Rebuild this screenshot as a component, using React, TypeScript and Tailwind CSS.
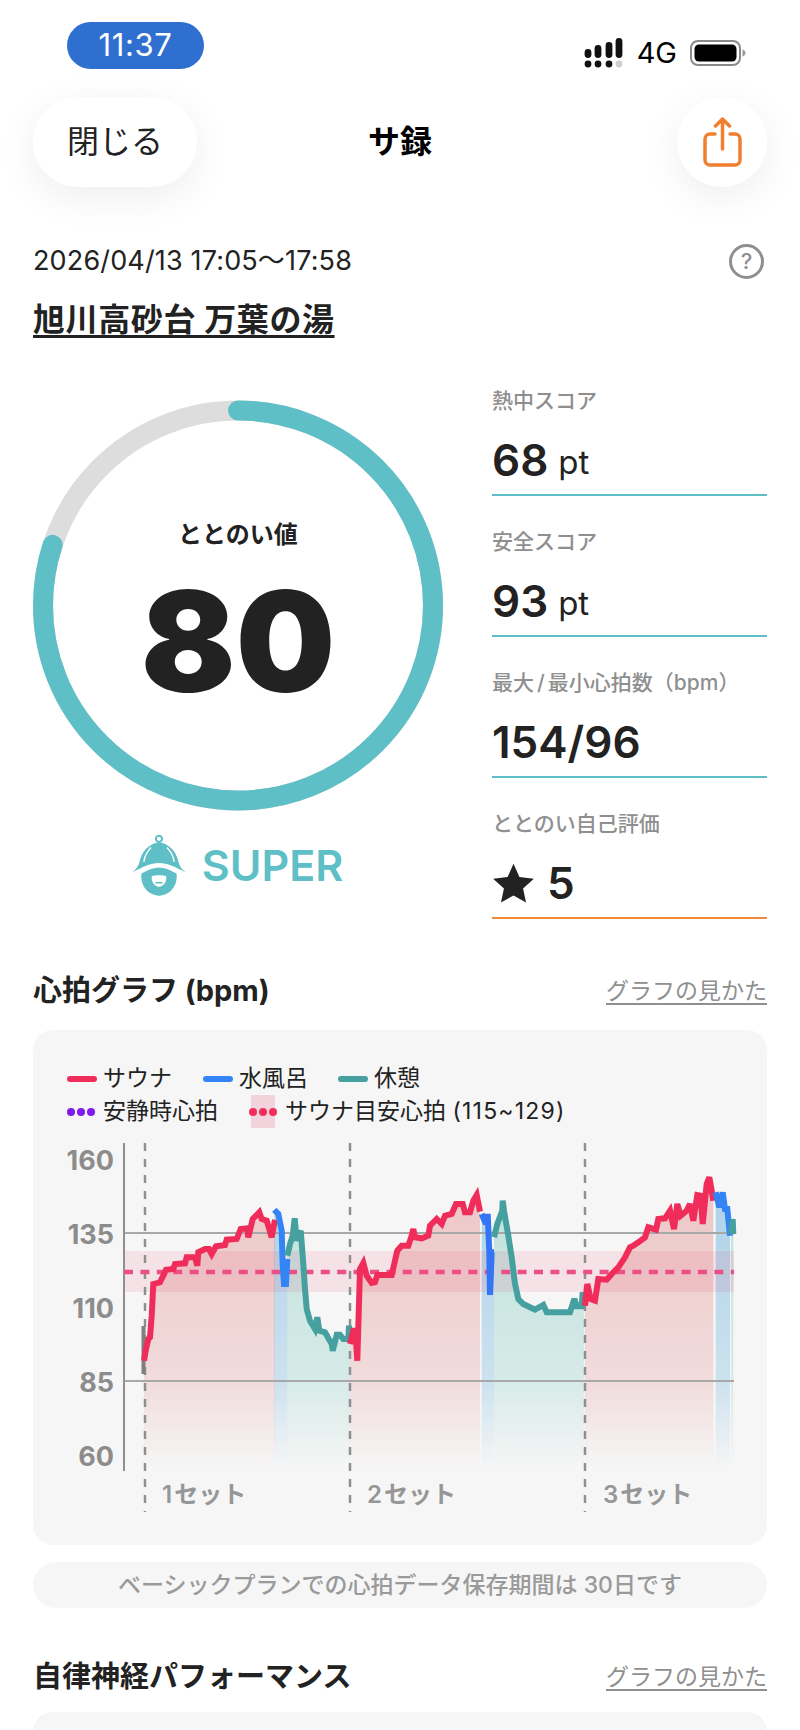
import React from "react";

type Pt = [number, number];

// traced off the reference, in zoomed crop coordinates (3x), see conv()
const conv = (pts: Pt[], ox: number, oy: number): Pt[] =>
	pts.map(([x, y]) => [ox + x / 3, oy + y / 3]);

const redA = conv([[102,575],[108,540],[115,510],[120,505],[125,440],[130,345],[150,340],[160,320],[168,302],[190,300],[195,285],[225,283],[230,265],[255,265],[262,290],[265,250],[285,240],[297,240],[305,255],[318,232],[345,228],[350,212],[380,210],[392,180],[412,178],[415,205],[428,150],[448,130],[455,150],[470,155],[485,205],[495,152]], 110, 1170);
const blueA = conv([[493,122],[505,135],[515,185],[518,290],[522,345],[528,345],[532,270]], 110, 1170);
const tealA = conv([[532,260],[540,225],[548,200],[554,148],[560,215],[572,185],[578,260],[585,360],[590,420],[600,455],[615,480],[622,445],[628,485],[645,490],[665,525],[668,545],[680,497],[690,497],[700,510],[715,510],[717,470],[720,510]], 110, 1170);
const redB = conv([[30,525],[40,485],[46,485],[52,575],[60,300],[70,282],[80,320],[95,342],[105,340],[112,318],[155,318],[172,245],[185,230],[205,230],[215,200],[220,180],[225,205],[245,208],[265,200],[270,170],[290,150],[305,165],[315,140],[335,135],[348,105],[368,105],[375,130],[390,130],[400,95],[410,78],[420,128]], 340, 1170);
const blueB = conv([[425,135],[438,165],[443,135],[448,250],[450,378],[455,250],[462,250]], 340, 1170);
const tealB = conv([[462,205],[472,165],[487,125],[488,95],[492,125],[505,200],[515,265],[525,345],[535,390],[550,405],[570,415],[585,422],[610,408],[620,430],[690,430],[703,390],[710,412],[725,412],[728,370],[733,400]], 340, 1170);
const redC = conv([[45,440],[52,375],[62,420],[75,425],[85,360],[110,362],[125,345],[145,325],[165,295],[180,265],[190,260],[205,250],[225,235],[235,205],[258,212],[265,180],[285,178],[300,155],[312,210],[322,135],[332,170],[350,155],[360,135],[370,185],[382,108],[392,110],[398,195],[410,75],[418,55],[425,95],[430,125]], 570, 1160);
const blueC = conv([[437,100],[448,145],[458,100],[465,150],[472,150],[480,230]], 570, 1160);
const tealC = conv([[483,225],[488,180],[490,225]], 570, 1160);

const line = (p: Pt[]) => "M" + p.map(([x, y]) => `${x.toFixed(1)} ${y.toFixed(1)}`).join("L");
const area = (p: Pt[]) =>
	`${line(p)}L${p[p.length - 1][0].toFixed(1)} 1470L${p[0][0].toFixed(1)} 1470Z`;

const series = [
	{ pts: redA, color: "#F02D5A", fill: "url(#fillRed)" },
	{ pts: blueA, color: "#3385F5", fill: "url(#fillBlue)" },
	{ pts: tealA, color: "#47A0A0", fill: "url(#fillTeal)" },
	{ pts: redB, color: "#F02D5A", fill: "url(#fillRed)" },
	{ pts: blueB, color: "#3375F5", fill: "url(#fillBlue)" },
	{ pts: tealB, color: "#47A0A0", fill: "url(#fillTeal)" },
	{ pts: redC, color: "#F02D5A", fill: "url(#fillRed)" },
	{ pts: blueC, color: "#3385F5", fill: "url(#fillBlue)" },
	{ pts: tealC, color: "#47A0A0", fill: "url(#fillTeal)" },
];

function Gradient({ id, color, top }: { id: string; color: string; top: number }) {
	return (
		<linearGradient id={id} gradientUnits="userSpaceOnUse" x1="0" y1="1180" x2="0" y2="1470">
			<stop offset="0" stopColor={color} stopOpacity={top} />
			<stop offset="0.7" stopColor={color} stopOpacity={top * 0.55} />
			<stop offset="1" stopColor={color} stopOpacity="0" />
		</linearGradient>
	);
}

function HeartChart() {
	return (
		<svg width="734" height="416" viewBox="33 1129 734 416" className="block">
			<defs>
				<Gradient id="fillRed" color="#D85555" top={0.3} />
				<Gradient id="fillBlue" color="#4FA3D8" top={0.45} />
				<Gradient id="fillTeal" color="#45B5A5" top={0.32} />
			</defs>
			{series.map((s, i) => (
				<path key={i} d={area(s.pts)} fill={s.fill} />
			))}
			<rect x="124" y="1252" width="610" height="41" fill="#E0305A" fillOpacity="0.1" />
			<path d="M124 1234H734M124 1382H734" stroke="#A8A8A8" strokeWidth="2" />
			<path d="M124 1144V1472" stroke="#8F8F8F" strokeWidth="2" />
			<path
				d="M145 1144V1513M350 1144V1513M585 1144V1513"
				stroke="#8F8F8F"
				strokeWidth="2.5"
				strokeDasharray="8 8"
			/>
			<path d="M124 1273H734" stroke="#EA5085" strokeWidth="4.5" strokeDasharray="9 7.4" />
			<path d="M143.5 1327V1375" stroke="#7F7F7F" strokeWidth="4" />
			{series.map((s, i) => (
				<path
					key={i}
					d={line(s.pts)}
					fill="none"
					stroke={s.color}
					strokeWidth="6"
					strokeLinejoin="miter"
					strokeMiterlimit="3"
				/>
			))}
			<g fill="#8C8C8C" fontSize="27" fontWeight="700" textAnchor="end">
				<text x="114" y="1171">160</text>
				<text x="114" y="1245">135</text>
				<text x="114" y="1319">110</text>
				<text x="114" y="1393">85</text>
				<text x="114" y="1467">60</text>
			</g>
			<g fill="#969696" fontSize="24" fontWeight="600">
				<text x="162" y="1504">1<tspan dx="2">セット</tspan></text>
				<text x="367" y="1504">2<tspan dx="2">セット</tspan></text>
				<text x="603" y="1504">3<tspan dx="2">セット</tspan></text>
			</g>
		</svg>
	);
}

function Stat({ label, children, last }: { label: React.ReactNode; children: React.ReactNode; last?: boolean }) {
	return (
		<div
			className={
				last
					? "h-[141px] border-b-2 border-[#F08A3C] pt-[32px]"
					: "h-[141px] border-b-2 border-[#5FBFC6] pt-[32px]"
			}>
			<div className="h-[28px] text-[21px] font-medium leading-[28px] text-[#8F8F8F]">{label}</div>
			<div className="mt-[21px] flex h-[48px] items-center text-[44px] font-semibold leading-[48px] text-[#222]">
				{children}
			</div>
		</div>
	);
}

function LegendLine({ color, label }: { color: string; label: string }) {
	return (
		<div className="flex items-center gap-[6px]">
			<span className={color} />
			<span>{label}</span>
		</div>
	);
}

function Dots({ color }: { color: string }) {
	return (
		<span className="flex shrink-0 gap-[2px]">
			<span className={color} />
			<span className={color} />
			<span className={color} />
		</span>
	);
}

function SignalIcon() {
	return (
		<svg width="40" height="30" viewBox="0 0 40 30" fill="#111">
			<circle cx="4" cy="26" r="3.4" />
			<rect x="0.6" y="11" width="6.8" height="9" rx="3.4" />
			<circle cx="14" cy="26" r="3.4" />
			<rect x="10.6" y="7" width="6.8" height="13" rx="3.4" />
			<circle cx="25" cy="26" r="3.4" />
			<rect x="21.6" y="4" width="6.8" height="16" rx="3.4" />
			<circle cx="35" cy="26" r="3.4" fill="#CFCFCF" />
			<rect x="31.6" y="0" width="6.8" height="20" rx="3.4" />
		</svg>
	);
}

function BatteryIcon() {
	return (
		<svg width="56" height="26" viewBox="0 0 56 26">
			<rect x="1" y="1" width="49" height="24" rx="7" fill="none" stroke="#8A8A8A" strokeWidth="2" />
			<rect x="4.5" y="4.5" width="42" height="17" rx="4.5" fill="#000" />
			<path d="M52.5 9.5c2 .6 3 2 3 3.5s-1 2.9-3 3.5z" fill="#9A9A9A" />
		</svg>
	);
}

function ShareIcon() {
	return (
		<svg width="39" height="50" viewBox="0 0 39 50" fill="none" stroke="#F08030" strokeWidth="3.5" strokeLinecap="round" strokeLinejoin="round">
			<path d="M12 17H7a5 5 0 0 0-5 5v21a5 5 0 0 0 5 5h25a5 5 0 0 0 5-5V22a5 5 0 0 0-5-5h-5" />
			<path d="M19.5 32V2M12.5 9l7-7 7 7" />
		</svg>
	);
}

function HatIcon() {
	return (
		<svg width="52" height="62" viewBox="40 45 150 180">
			<circle cx="115" cy="59" r="9" fill="none" stroke="#5FBFC6" strokeWidth="6" />
			<path
				d="M38 156C50 146 54 140 58 128C64 95 88 72 115 70C142 72 166 95 172 128C176 140 180 146 192 156C165 142 140 129 115 129C90 129 65 142 38 156Z"
				fill="#5FBFC6"
			/>
			<path d="M92 84C80 96 73 110 71 126M138 84C150 96 157 110 159 126" fill="none" stroke="#fff" strokeWidth="4" />
			<path
				d="M64 160C84 148 100 142 115 142C130 142 146 148 166 160C170 195 147 224 115 224C83 224 60 195 64 160Z"
				fill="#5FBFC6"
			/>
			<path d="M94 168C106 164 124 164 136 168C138 185 128 198 115 198C102 198 92 185 94 168Z" fill="#fff" />
			<rect x="104" y="184" width="22" height="5" rx="2.5" fill="#5FBFC6" />
		</svg>
	);
}

export default function App() {
	return (
		<div className="h-[1730px] w-[800px] overflow-hidden bg-white font-['Inter','Noto_Sans_CJK_JP',sans-serif] text-[#222]">
			{/* status bar */}
			<div className="flex h-[97px] items-start justify-between pl-[67px] pr-[54px] pt-[22px]">
				<div className="flex h-[47px] w-[137px] items-center justify-center rounded-full bg-[#2F6FD0] text-[31px] font-normal tracking-[0.6px] text-white">
					11:37
				</div>
				<div className="mt-[16px] flex items-center gap-[13px] text-black">
					<SignalIcon />
					<span className="text-[29px] font-normal leading-[30px]">4G</span>
					<BatteryIcon />
				</div>
			</div>

			{/* nav */}
			<div className="grid grid-cols-[1fr_auto_1fr] items-center px-[33px]">
				<button className="flex h-[90px] w-[164px] items-center justify-center rounded-full bg-white text-[32px] text-[#222] shadow-[0_10px_40px_rgba(0,0,0,0.07)]">
					閉じる
				</button>
				<div className="text-[32px] font-bold text-black">サ録</div>
				<button className="flex h-[90px] w-[90px] items-center justify-center justify-self-end rounded-full bg-white shadow-[0_10px_40px_rgba(0,0,0,0.07)]">
					<ShareIcon />
				</button>
			</div>

			<div className="px-[33px]">
				<div className="mt-[57px] flex h-[34px] items-center justify-between">
					<span className="text-[27px] tracking-[0.15px]">2026/04/13 17:05～17:58</span>
					<span className="mr-[3px] flex h-[35px] w-[35px] items-center justify-center rounded-full border-[3px] border-[#8F8F8F] text-[22px] font-medium leading-none text-[#8F8F8F]">
						?
					</span>
				</div>
				<div className="mt-[23px] h-[38px] text-[32px] font-bold leading-[38px] tracking-[0.6px] underline decoration-[3px] underline-offset-[4px]">
					旭川高砂台 万葉の湯
				</div>

				{/* score */}
				<div className="mt-[15px] flex">
					<div className="w-[410px] pt-[46px]">
						<div className="relative flex h-[411px] w-[410px] flex-col items-center">
							<svg width="410" height="411" viewBox="0 0 410 411" className="absolute inset-0">
								<circle cx="205" cy="205.5" r="195" fill="none" stroke="#DDDDDD" strokeWidth="20" />
								<circle
									cx="205"
									cy="205.5"
									r="195"
									fill="none"
									stroke="#5FBFC6"
									strokeWidth="20"
									strokeLinecap="round"
									strokeDasharray="980.2 1225.2"
									transform="rotate(-90 205 205.5)"
								/>
							</svg>
							<div className="relative mt-[118px] text-[24px] font-bold leading-[34px]">ととのい値</div>
							<div className="relative mt-[9px] text-[140px] font-black leading-[160px]">80</div>
						</div>
						<div className="mt-[23px] flex items-center justify-center gap-[17px]">
							<HatIcon />
							<span className="text-[43px] font-semibold leading-[50px] text-[#5FBFC6]">SUPER</span>
						</div>
					</div>
					<div className="ml-[49px] mt-[1px] w-[275px]">
						<Stat label="熱中スコア">
							68<span className="ml-[10px] mt-[4px] text-[33px] font-normal">pt</span>
						</Stat>
						<Stat label="安全スコア">
							93<span className="ml-[10px] mt-[4px] text-[33px] font-normal">pt</span>
						</Stat>
						<Stat
							label={
								<>
									最大<span className="mx-[3px]">/</span>最小心拍数（bpm）
								</>
							}>
							154/96
						</Stat>
						<Stat label="ととのい自己評価" last>
							<svg width="43" height="40" viewBox="0 0 24 23" fill="#222" className="mr-[12px]">
								<path d="M12 .5l3.4 7.6 8.3.9-6.2 5.6 1.7 8.1L12 18.7l-7.2 4 1.7-8.1L.3 9l8.3-.9z" />
							</svg>
							5
						</Stat>
					</div>
				</div>

				{/* heart rate */}
				<div className="mt-[52px] flex h-[40px] items-center justify-between">
					<span className="text-[29px] font-bold">心拍グラフ (bpm)</span>
					<a className="text-[23px] text-[#8F8F8F] underline underline-offset-[4px]">グラフの見かた</a>
				</div>
				<div className="mt-[19px] h-[515px] rounded-[20px] bg-[#F6F6F6] pt-[32px]">
					<div className="pl-[34px] text-[23px] text-[#222]">
						<div className="flex h-[33px] items-center">
							<LegendLine color="h-[6px] w-[30px] rounded-full bg-[#F02D5A]" label="サウナ" />
							<div className="ml-[31px]">
								<LegendLine color="h-[6px] w-[30px] rounded-full bg-[#3385F5]" label="水風呂" />
							</div>
							<div className="ml-[30px]">
								<LegendLine color="h-[6px] w-[30px] rounded-full bg-[#47A0A0]" label="休憩" />
							</div>
						</div>
						<div className="flex h-[33px] items-center">
							<div className="flex w-[184px] items-center gap-[8px]">
								<Dots color="h-[8px] w-[8px] rounded-full bg-[#7F1AF0]" />
								<span>安静時心拍</span>
							</div>
							<div className="flex h-[33px] w-[24px] items-center justify-center bg-[#F2D3DC]">
								<Dots color="h-[8px] w-[8px] rounded-full bg-[#F02D5A]" />
							</div>
							<span className="ml-[10px]">
								サウナ目安心拍 <span className="tracking-[1.2px]">(115~129)</span>
							</span>
						</div>
					</div>
					<HeartChart />
				</div>
				<div className="mt-[17px] flex h-[46px] items-center justify-center rounded-[23px] bg-[#F6F6F6] text-[23px] font-medium text-[#9A9A9A]">
					ベーシックプランでの心拍データ保存期間は 30日です
				</div>

				<div className="mt-[49px] flex h-[40px] items-center justify-between">
					<span className="text-[29px] font-bold">自律神経パフォーマンス</span>
					<a className="text-[23px] text-[#8F8F8F] underline underline-offset-[4px]">グラフの見かた</a>
				</div>
				<div className="mt-[15px] h-[300px] rounded-[20px] bg-[#F6F6F6]" />
			</div>
		</div>
	);
}
